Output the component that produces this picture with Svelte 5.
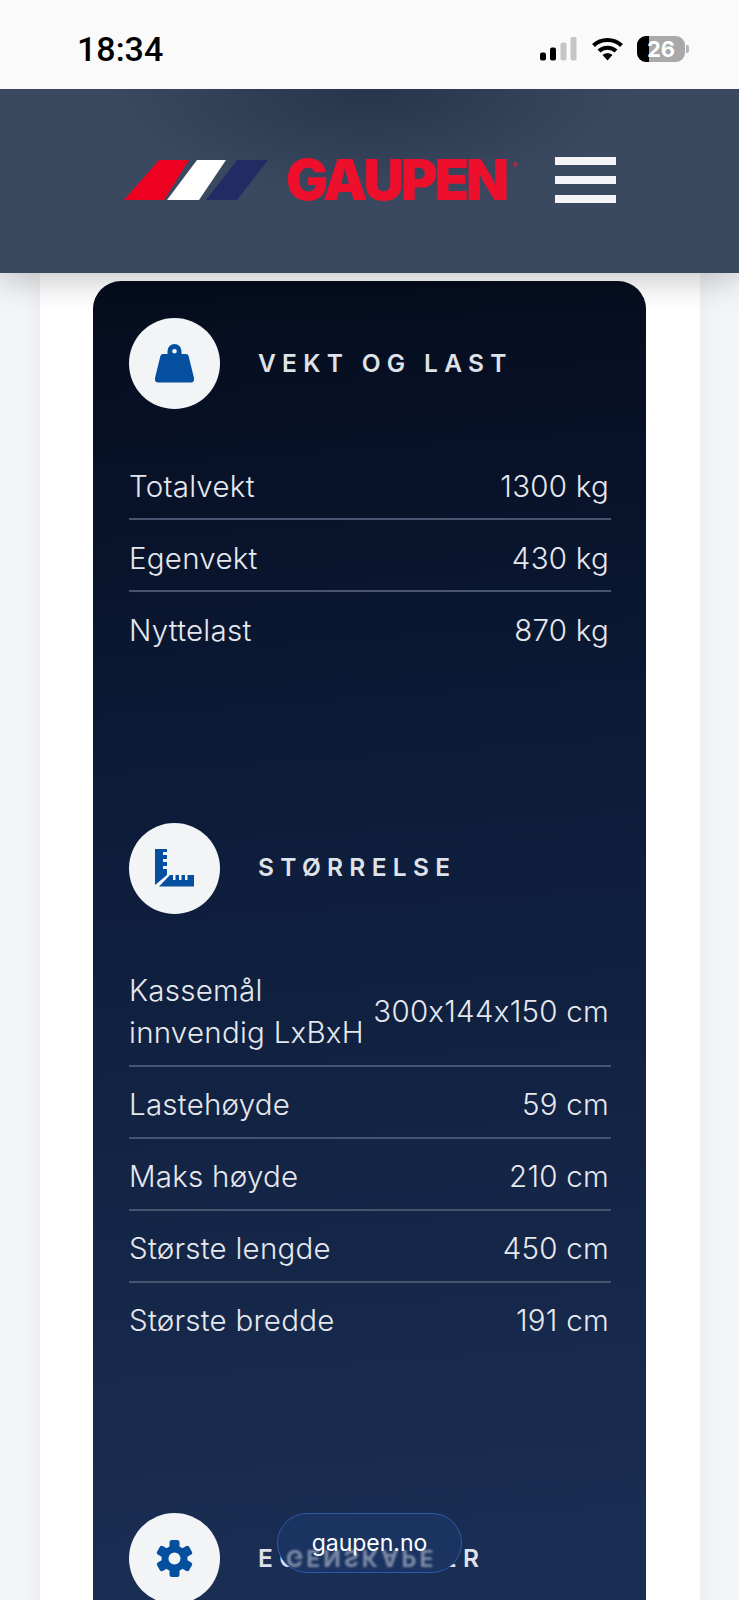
<script>
	const weight = [
		{ label: 'Totalvekt', value: '1300 kg' },
		{ label: 'Egenvekt', value: '430 kg' },
		{ label: 'Nyttelast', value: '870 kg' }
	];
	const size = [
		{ label: 'Kassemål innvendig LxBxH', value: '300x144x150 cm' },
		{ label: 'Lastehøyde', value: '59 cm' },
		{ label: 'Maks høyde', value: '210 cm' },
		{ label: 'Største lengde', value: '450 cm' },
		{ label: 'Største bredde', value: '191 cm' }
	];
	const teeth = [0, 60, 120, 180, 240, 300];
</script>

<div class="page">
	<div class="status">
		<span class="time">18:34</span>
		<div class="status_icons">
			<svg width="37" height="24" viewBox="0 0 37 24" fill="#000">
				<rect x="0" y="15.5" width="6" height="8" rx="2" />
				<rect x="10" y="10.5" width="6" height="13" rx="2" />
				<rect x="20.5" y="5.5" width="6" height="18" rx="2" fill="#c4c4c4" />
				<rect x="30.5" y="0" width="6" height="23.5" rx="2" fill="#c4c4c4" />
			</svg>
			<svg class="wifi" width="31" height="24" viewBox="0 0 31 24" fill="none" stroke="#000" stroke-width="4">
				<path d="M1.5 8.5 C9 1 22 1 29.5 8.5" />
				<path d="M7 14 C11.5 9.5 19.5 9.5 24 14" />
				<path d="M15.5 23.5 L10.5 18 C13 15.5 18 15.5 20.5 18 Z" fill="#000" stroke="none" />
			</svg>
			<div class="battery">
				<div class="battery_fill"></div>
				<span>26</span>
			</div>
			<div class="battery_nub"></div>
		</div>
	</div>

	<header class="header">
		<div class="logo">
			<svg width="145" height="40" viewBox="0 0 145 40">
				<polygon points="0,40 35,0 65,0 40,40" fill="#ee0020" />
				<polygon points="43,40 73,0 102,0 75,40" fill="#fff" />
				<polygon points="82,40 113,0 144,0 113,40" fill="#222b63" />
			</svg>
			<span class="logo_text">GAUPEN</span>
			<span class="logo_reg">®</span>
		</div>
		<div class="burger"><span></span><span></span><span></span></div>
	</header>

	<main class="panel">
		<div class="card">
			<section class="section">
				<div class="heading">
					<div class="circle">
						<svg width="39" height="39" viewBox="0 0 39 39" fill="#04509f">
							<path fill-rule="evenodd" d="M19.5 0 A7 7 0 0 1 26.5 7 V10 H31 Q33 10 33.6 12 L39 34 Q39.6 38.5 36 38.5 H3 Q-0.6 38.5 0 34 L5.4 12 Q6 10 8 10 H12.5 V7 A7 7 0 0 1 19.5 0 Z M19.5 5 A2.3 2.3 0 1 0 19.5 9.6 A2.3 2.3 0 1 0 19.5 5 Z" />
						</svg>
					</div>
					<h2>VEKT OG LAST</h2>
				</div>
				{#each weight as row}
					<div class="row"><span class="label">{row.label}</span><span class="value">{row.value}</span></div>
				{/each}
			</section>

			<section class="section">
				<div class="heading">
					<div class="circle">
						<svg width="39" height="38" viewBox="0 0 39 38" fill="#04509f">
							<path d="M0 0 H12 V3 H8 V6 H12 V10 H8 V13 H12 V17 H8 V20 H12 V26 L0 36 Z" />
							<path d="M4 37.5 L15 26 H18 V31 H20.5 V26 H24 V31 H26.5 V26 H30 V31 H32.5 V26 H39 V37.5 Z" />
						</svg>
					</div>
					<h2>STØRRELSE</h2>
				</div>
				{#each size as row}
					<div class="row"><span class="label">{row.label}</span><span class="value">{row.value}</span></div>
				{/each}
			</section>

			<section class="section">
				<div class="heading">
					<div class="circle">
						<svg width="37" height="37" viewBox="-18.5 -18.5 37 37" fill="#04509f">
							{#each teeth as a}
								<rect x="-5" y="-18.5" width="10" height="10" rx="2.5" transform="rotate({a})" />
							{/each}
							<circle r="9.5" fill="none" stroke="#04509f" stroke-width="7" />
						</svg>
					</div>
					<h2>EGENSKAPER</h2>
				</div>
			</section>
		</div>
	</main>

	<div class="pill">
		<span class="ghost" aria-hidden="true">GENSKAPE</span>
		<span class="pill_text">gaupen.no</span>
	</div>
</div>

<style>
	:global(body) {
		margin: 0;
	}

	.page {
		position: relative;
		height: 1600px;
		overflow: hidden;
		background: #f3f5f8;
		font-family: Inter, 'Liberation Sans', sans-serif;
		font-feature-settings: 'calt' 0;
	}

	.status {
		position: relative;
		z-index: 3;
		height: 89px;
		background: #fafafa;
		display: flex;
		justify-content: space-between;
		align-items: center;
		padding: 16px 50px 8px 77px;
		box-sizing: border-box;
	}

	.time {
		font-size: 34px;
		font-weight: 500;
		color: #000;
		font-family: Roboto, sans-serif;
	}

	.status_icons {
		display: flex;
		align-items: center;
	}

	.wifi {
		margin-left: 15px;
	}

	.battery {
		position: relative;
		width: 48px;
		height: 26px;
		margin-left: 14px;
		border-radius: 9px;
		background: #a9a9a9;
		overflow: hidden;
		display: flex;
		justify-content: center;
		align-items: center;
	}

	.battery_fill {
		position: absolute;
		left: 0;
		top: 0;
		bottom: 0;
		width: 12px;
		background: #000;
	}

	.battery span {
		position: relative;
		color: #fff;
		font-size: 22px;
		font-weight: 700;
	}

	.battery_nub {
		width: 3px;
		height: 8px;
		margin-left: 1px;
		border-radius: 0 2px 2px 0;
		background: #b5b5b5;
	}

	.header {
		position: relative;
		z-index: 2;
		height: 184px;
		box-sizing: border-box;
		padding: 68px 123px 0 124px;
		display: flex;
		justify-content: space-between;
		align-items: flex-start;
		background: radial-gradient(ellipse 260px 110px at 50% 0, #26344c, #3b4960 100%), #3b4960;
		box-shadow: 0 8px 30px rgba(0, 0, 0, 0.22);
	}

	.logo {
		display: flex;
		align-items: flex-start;
		height: 48px;
		margin-top: 3px;
	}

	.logo_text {
		margin-left: 17px;
		font-size: 56px;
		line-height: 40px;
		font-weight: 900;
		letter-spacing: -3px;
		color: #ee0f2c;
	}

	.logo_reg {
		font-size: 8px;
		line-height: 10px;
		margin-left: 6px;
		color: #ee0f2c;
	}

	.burger {
		width: 61px;
		display: flex;
		flex-direction: column;
		gap: 11px;
	}

	.burger span {
		height: 8px;
		background: #f4f4f6;
	}

	.panel {
		margin: 0 39px 0 40px;
		padding: 8px 54px 0 53px;
		background: #fff;
		box-shadow: 0 0 24px rgba(30, 40, 60, 0.05);
	}

	.card {
		border-radius: 28px;
		padding: 37px 36px 0;
		height: 1500px;
		background: linear-gradient(176deg, #050c1d 0, #0c1b38 500px, #1a2d52 1280px);
		color: #e6e8ee;
	}

	.section {
		margin-bottom: 158.5px;
	}

	.heading {
		display: flex;
		align-items: center;
		gap: 38px;
		margin-bottom: 39px;
	}

	.circle {
		width: 91px;
		height: 91px;
		border-radius: 50%;
		background: #f3f4f6;
		display: flex;
		justify-content: center;
		align-items: center;
	}

	h2 {
		margin: 0 0 2px;
		font-size: 24.5px;
		font-weight: 600;
		letter-spacing: 6.3px;
		color: #dfe2e8;
	}

	.row {
		display: flex;
		justify-content: space-between;
		align-items: center;
		gap: 8px;
		box-sizing: border-box;
		padding: 16.5px 2px 11.5px 0;
		margin-right: -1px;
		font-size: 29.5px;
		font-weight: 350;
		letter-spacing: 0.25px;
		line-height: 42px;
		border-bottom: 2px solid #46546f;
	}

	.row:last-child {
		border-bottom-color: transparent;
	}

	.label {
		flex: 0 1 auto;
		min-width: 234px;
		max-width: 240px;
	}

	.value {
		white-space: nowrap;
	}

	.pill {
		position: absolute;
		left: 277px;
		top: 1513px;
		width: 185px;
		height: 60px;
		box-sizing: border-box;
		border: 1.5px solid #2b5cab;
		border-radius: 30px;
		background: #1a3361;
		overflow: hidden;
		display: flex;
		justify-content: center;
		align-items: center;
	}

	.pill_text {
		position: relative;
		color: #fff;
		font-size: 23px;
	}

	.ghost {
		position: absolute;
		left: 8px;
		right: 0;
		bottom: 0;
		font-size: 23px;
		font-weight: 700;
		letter-spacing: 3px;
		white-space: nowrap;
		color: #7f8ca5;
		filter: blur(1.3px);
		transform: scaleY(-1);
	}
</style>
